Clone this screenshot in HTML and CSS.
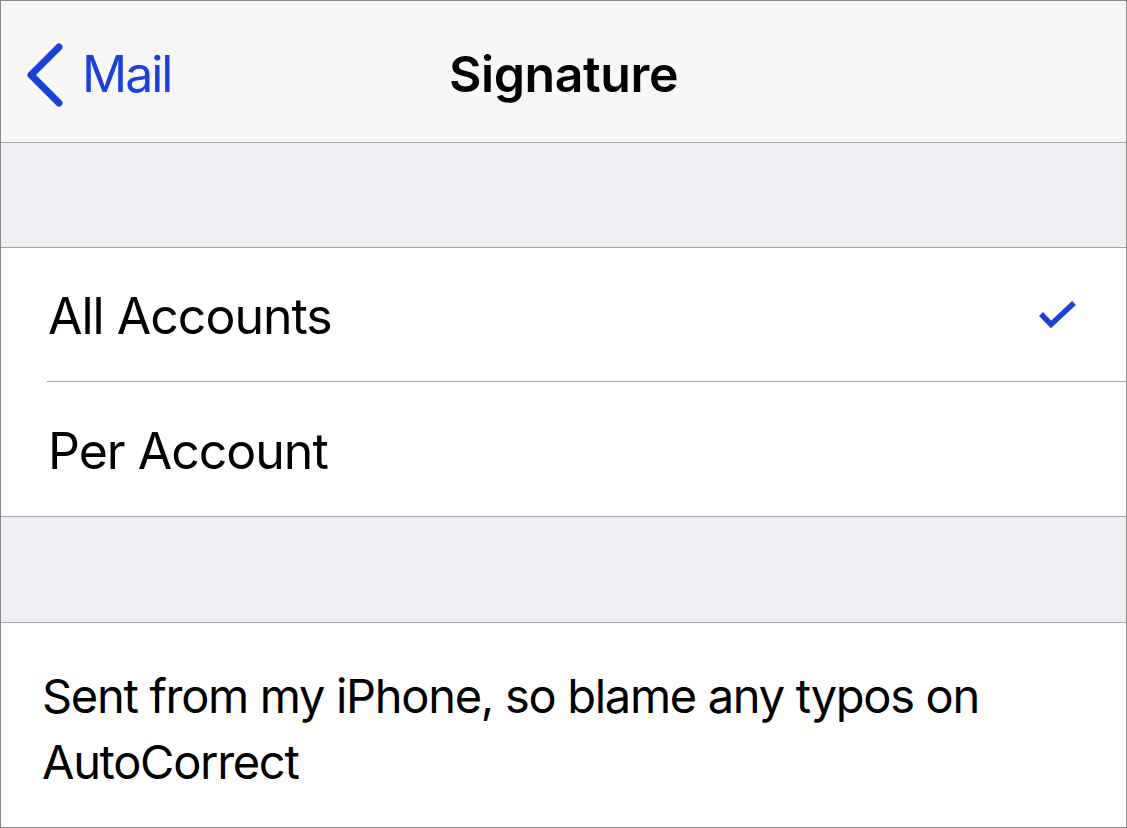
FILE: index.html
```html
<!DOCTYPE html>
<html>
<head>
<meta charset="utf-8">
<link rel="stylesheet" href="styles.css">
</head>
<body>
<div class="screen">
  <header class="nav">
    <div class="back">
      <svg class="chev" width="40" height="70" viewBox="0 0 40 70"><polyline points="34,7 6,35 34,63" fill="none" stroke="#1c41d9" stroke-width="7" stroke-linecap="round" stroke-linejoin="round"/></svg>
      <span class="back-label">Mail</span>
    </div>
    <div class="title">Signature</div>
    <div class="spacer"></div>
  </header>
  <div class="gap gap1"></div>
  <div class="group">
    <div class="row row-first">
      <span class="row-label">All Accounts</span>
      <svg class="check" width="40" height="32" viewBox="0 0 40 32"><polyline points="3,14 13,24.5 36,3" fill="none" stroke="#1c41d9" stroke-width="5.5" stroke-linejoin="miter"/></svg>
    </div>
    <div class="row row-last">
      <span class="row-label">Per Account</span>
    </div>
  </div>
  <div class="gap gap2"></div>
  <div class="sig">Sent from my iPhone, so blame any typos on AutoCorrect</div>
</div>
</body>
</html>
```

FILE: styles.css
```css
html, body {
  margin: 0;
  padding: 0;
  background: #ffffff;
}
.screen {
  width: 1127px;
  height: 828px;
  box-sizing: border-box;
  border: 1px solid #8a8a8a;
  display: flex;
  flex-direction: column;
  font-family: Inter, "Liberation Sans", sans-serif;
  color: #000;
  overflow: hidden;
}
.nav {
  height: 142px;
  box-sizing: border-box;
  padding-top: 5px;
  flex: none;
  background: #f7f7f7;
  border-bottom: 1px solid #a5a5a9;
  display: grid;
  grid-template-columns: 1fr auto 1fr;
  align-items: center;
}
.back {
  display: flex;
  align-items: center;
  padding-left: 24px;
  color: #1c41d9;
}
.chev {
  display: block;
  margin-top: 1px;
}
.back-label {
  font-size: 50px;
  margin-left: 17px;
  letter-spacing: -2px;
}
.title {
  font-size: 50px;
  font-weight: 600;
  letter-spacing: -0.4px;
}
.gap {
  flex: none;
  background: #efeff4;
  border-bottom: 1px solid #a5a5a9;
}
.gap1 { height: 104px; }
.gap2 { height: 105px; }
.group {
  flex: none;
  background: #fff;
  border-bottom: 1px solid #a5a5a9;
}
.row {
  display: flex;
  align-items: center;
  justify-content: space-between;
  padding-left: 47px;
  padding-right: 48px;
  position: relative;
}
.row-first {
  height: 133px;
  border-bottom: 1px solid #a5a5a9;
  margin-left: 46px;
  padding-left: 1px;
}
.row-last {
  height: 134px;
}
.row-label {
  font-size: 50px;
  letter-spacing: -1px;
  margin-top: 3px;
}
.check {
  display: block;
  margin-top: 2px;
}
.sig {
  flex: 1;
  background: #fff;
  font-size: 47px;
  line-height: 66px;
  padding: 40px 60px 0 41px;
  letter-spacing: -1.3px;
}
```
